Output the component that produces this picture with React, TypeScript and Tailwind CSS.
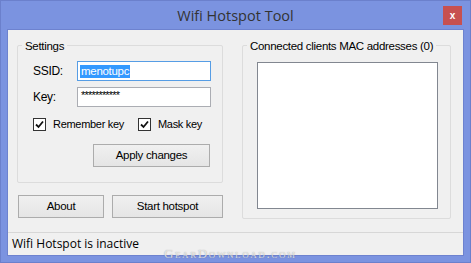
import React from "react"

const ui = "font-['Liberation_Sans',Arial,sans-serif] text-[11px] tracking-[-0.3px] text-black"

function CheckBox({ label }: { label: string }) {
  return (
    <div className="flex items-center">
      <div className="w-[13px] h-[13px] border border-[#333333] bg-white flex items-center justify-center">
        <svg width="9" height="9" viewBox="0 0 9 9">
          <path d="M1 4.5 L3.5 7 L8 1.5" fill="none" stroke="#111" strokeWidth="1.8" />
        </svg>
      </div>
      <span className="ml-[7px] leading-[13px] text-[11px]">{label}</span>
    </div>
  )
}

function Button({ label, className }: { label: string; className?: string }) {
  return (
    <div
      className={`h-[23px] border border-[#acacac] bg-gradient-to-b from-[#f0f0f0] to-[#e5e5e5] flex items-center justify-center text-[11.5px] ${className ?? ""}`}
    >
      {label}
    </div>
  )
}

function GroupBox({ title, className, bodyClass, children }: { title: string; className?: string; bodyClass?: string; children?: React.ReactNode }) {
  return (
    <div className={`border border-[#dcdcdc] rounded-[2px] flex flex-col ${className ?? ""}`}>
      <span className="-mt-[7px] ml-[4px] px-[3px] self-start bg-[#f0f0f0] leading-[14px] text-[11.5px] whitespace-nowrap">{title}</span>
      <div className={`flex flex-col ${bodyClass ?? ""}`}>{children}</div>
    </div>
  )
}

export default function App() {
  return (
    <div className="w-[471px] h-[263px] bg-[#7b93e0] border border-[#6b80cc] flex flex-col relative overflow-hidden">
      {/* title bar */}
      <div className="h-[28px] grid grid-cols-[1fr_auto_1fr]">
        <div />
        <div className="font-['Open_Sans',sans-serif] text-[14.5px] text-[#333333] leading-[28px] pt-[1px]">
          Wifi Hotspot Tool
        </div>
        <div className="flex justify-end">
          <div className="mt-[5px] mr-[8px] w-[19px] h-[19px] bg-[#c75050] flex items-center justify-center text-white text-[10px] font-bold font-['Liberation_Sans',sans-serif] leading-none">
            x
          </div>
        </div>
      </div>

      {/* client area */}
      <div className={`mx-[6px] border border-[#6d82cf] bg-[#f0f0f0] h-[227px] flex flex-col ${ui}`}>
        <div className="h-[202px] flex pl-[9px] pt-[15px]">
          {/* left column */}
          <div className="w-[206px] flex flex-col">
            <GroupBox title="Settings" className="h-[138px]" bodyClass="pl-[15px] pr-[11px]">
              <div className="flex items-center mt-[8px] h-[20px]">
                <span className="w-[44px] text-[12px]">SSID:</span>
                <div className="flex-1 h-[20px] border border-[#569de5] bg-white flex items-center pl-[2px]">
                  <span className="bg-[#3399ff] text-white leading-[13px] px-[1px] text-[11.5px]">menotupc</span>
                </div>
              </div>
              <div className="flex items-center mt-[6px] h-[20px]">
                <span className="w-[44px] text-[12px]">Key:</span>
                <div className="flex-1 h-[20px] border border-[#abadb3] bg-white flex items-start pl-[3px] pt-[1px]">
                  <span className="tracking-[-0.8px] leading-[12px]">***********</span>
                </div>
              </div>
              <div className="flex items-center mt-[11px] gap-[14px]">
                <CheckBox label="Remember key" />
                <CheckBox label="Mask key" />
              </div>
              <div className="flex justify-end mt-[13px] pr-[1px]">
                <Button label="Apply changes" className="w-[117px]" />
              </div>
            </GroupBox>
            <div className="flex mt-[12px] pl-[1px] gap-[8px]">
              <Button label="About" className="w-[86px]" />
              <Button label="Start hotspot" className="w-[111px]" />
            </div>
          </div>

          {/* right column */}
          <GroupBox title="Connected clients MAC addresses (0)" className="ml-[19px] w-[209px] h-[174px]" bodyClass="pl-[14px]">
            <div className="mt-[9px] w-[181px] h-[147px] bg-white border border-[#828790]" />
          </GroupBox>
        </div>

        {/* status bar */}
        <div className="h-[23px] border-t border-[#d7d7d7] flex items-center pl-[4px] font-['Open_Sans',sans-serif] text-[12px] tracking-normal">
          Wifi Hotspot is inactive
        </div>
      </div>

      {/* watermark */}
      <div className="absolute left-[163px] top-[246px] font-['Liberation_Serif',serif] [font-variant:small-caps] text-[13px] tracking-[1.6px] text-white/75 [text-shadow:0_0_1px_rgba(80,80,80,0.6)] leading-none">
        GearDownload.com
      </div>
    </div>
  )
}
